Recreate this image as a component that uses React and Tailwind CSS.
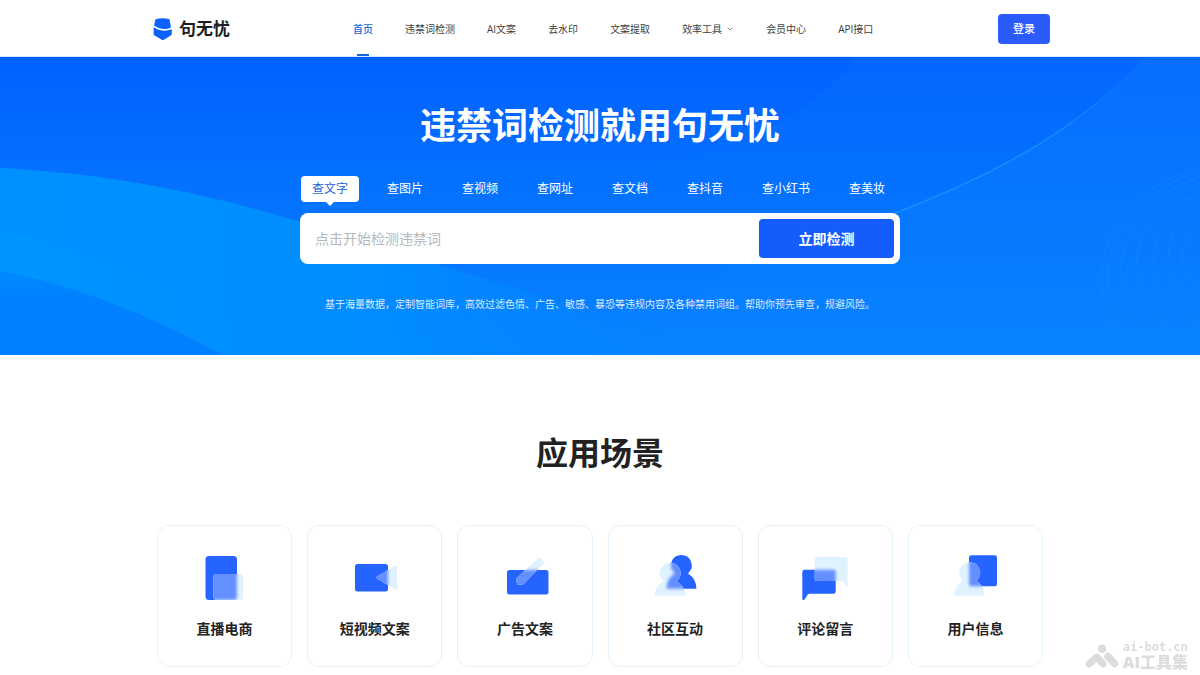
import React from 'react';
import { ChevronDown } from 'lucide-react';

const NAV = ['首页', '违禁词检测', 'AI文案', '去水印', '文案提取', '效率工具', '会员中心', 'API接口'];
const TABS = ['查文字', '查图片', '查视频', '查网址', '查文档', '查抖音', '查小红书', '查美妆'];

function GlassIcon({ id, solid, glass }) {
  return (
    <svg viewBox="0 0 60 60" className="h-[60px] w-[60px]" aria-hidden="true">
      <defs>
        <clipPath id={`${id}-clip`}>{glass}</clipPath>
        <filter id={`${id}-blur`} x="-30%" y="-30%" width="160%" height="160%" colorInterpolationFilters="sRGB">
          <feGaussianBlur stdDeviation="1.8" />
        </filter>
      </defs>
      <g fill="#2664ff">{solid}</g>
      <g fill="#e1f2ff">{glass}</g>
      <g clipPath={`url(#${id}-clip)`}>
        <g fill="#6490ff" filter={`url(#${id}-blur)`}>{solid}</g>
      </g>
    </svg>
  );
}

const SCENES = [
  {
    id: 'live',
    label: '直播电商',
    solid: <rect x="10.500" y="8" width="31.500" height="44" rx="3.500" />,
    glass: <rect x="18.500" y="26" width="29.500" height="26" rx="3" />,
  },
  {
    id: 'video',
    label: '短视频文案',
    solid: <rect x="10" y="16" width="33" height="27.500" rx="2.500" />,
    glass: <path d="M32 28.500 L50.500 17.800 Q52 17 52 18.500 V40.500 Q52 42 50.500 41.200 L32 30.800 Q30.500 29.700 32 28.500 Z" />,
  },
  {
    id: 'ad',
    label: '广告文案',
    solid: <rect x="12" y="22" width="41.500" height="24.500" rx="2.500" />,
    glass: <path d="M44.300 9.200 L49.600 14.600 L28.500 36.200 L23.300 37 Q22 37 22 35.800 L21 30.800 Z" />,
  },
  {
    id: 'social',
    label: '社区互动',
    solid: (
      <path d="M36.300 7 A10.400 10.400 0 0 1 43.600 24.800 Q42.800 25.600 43.800 26.300 C48.500 29 51.300 34.500 51.400 40.700 H21.600 C21.800 34.500 24 29 28.800 26.300 Q29.800 25.600 29 24.800 A10.400 10.400 0 0 1 36.300 7 Z" />
    ),
    glass: (
      <path d="M25.200 14.800 A10.400 10.400 0 0 1 32.500 32.600 Q31.700 33.300 32.700 34 C37.300 36.500 39.800 41.500 40.100 47.700 H9.800 C10 41.500 12.900 36.500 17.700 34 Q18.700 33.300 17.900 32.600 A10.400 10.400 0 0 1 25.200 14.800 Z" />
    ),
  },
  {
    id: 'comment',
    label: '评论留言',
    solid: (
      <path d="M9.500 21.700 H38.500 Q40.700 21.700 40.700 24 V43.500 Q40.700 45.700 38.500 45.700 H15 Q13.300 45.700 12.500 47 L9.500 51.500 Q7.300 53 7.300 50.500 V24 Q7.300 21.700 9.500 21.700 Z" />
    ),
    glass: (
      <path d="M21.900 9 H50.500 Q52.700 9 52.700 11.200 V38 Q52.500 40 51 38.500 L48.300 34.500 Q47.500 33 46 33 H21.900 Q19.700 33 19.700 30.800 V11.200 Q19.700 9 21.900 9 Z" />
    ),
  },
  {
    id: 'user',
    label: '用户信息',
    solid: <rect x="24" y="7.300" width="28" height="31" rx="2.500" />,
    glass: (
      <path d="M24.700 14.300 A10.400 10.400 0 0 1 32 32.100 Q31.200 32.900 32.200 33.600 C36.800 36.300 39.200 41.500 39.400 47.700 H9.200 C9.400 41.500 12.400 36.300 17.200 33.600 Q18.200 32.900 17.400 32.100 A10.400 10.400 0 0 1 24.700 14.300 Z" />
    ),
  },
];

function HeroBackdrop() {
  return (
    <svg
      viewBox="0 0 1200 298"
      preserveAspectRatio="none"
      className="absolute inset-0 h-full w-full"
      aria-hidden="true"
    >
      <defs>
        <linearGradient id="sky" x1="0" y1="0" x2="0" y2="1">
          <stop offset="0" stopColor="#0566ff" />
          <stop offset="0.5" stopColor="#0473ff" />
          <stop offset="1" stopColor="#0683ff" />
        </linearGradient>
        <linearGradient id="deep" x1="0" y1="0" x2="0" y2="1">
          <stop offset="0" stopColor="#0060ff" stopOpacity="0.8" />
          <stop offset="1" stopColor="#0068ff" stopOpacity="0.1" />
        </linearGradient>
        <linearGradient id="right" x1="0" y1="0" x2="0" y2="1">
          <stop offset="0" stopColor="#0b75ff" />
          <stop offset="1" stopColor="#0883ff" />
        </linearGradient>
        <linearGradient id="wave" x1="0" y1="0" x2="1" y2="0">
          <stop offset="0" stopColor="#0091ff" />
          <stop offset="0.45" stopColor="#008eff" />
          <stop offset="1" stopColor="#0682ff" stopOpacity="0" />
        </linearGradient>
        <linearGradient id="band" x1="0" y1="0" x2="1" y2="0">
          <stop offset="0" stopColor="#0098ff" />
          <stop offset="1" stopColor="#008eff" stopOpacity="0" />
        </linearGradient>
        <linearGradient id="low" x1="0" y1="0" x2="0" y2="1">
          <stop offset="0" stopColor="#0088ff" />
          <stop offset="0.4" stopColor="#0080ff" />
          <stop offset="1" stopColor="#0080ff" />
        </linearGradient>
        <linearGradient id="edge" x1="0" y1="1" x2="1" y2="0">
          <stop offset="0" stopColor="#1292ff" />
          <stop offset="0.6" stopColor="#108aff" />
          <stop offset="1" stopColor="#0b75ff" stopOpacity="0" />
        </linearGradient>
      </defs>
      <rect width="1200" height="298" fill="url(#sky)" />
      <path d="M0 0 H857 C800 72 710 112 560 112 C380 116 200 112 0 112 Z" fill="url(#deep)" />
      <path d="M1145 0 C1085 66 1010 112 895 156 C850 172 800 186 740 198 L640 298 H1200 V0 Z" fill="url(#right)" fillOpacity="0.5" />
      <path d="M1145 0 C1085 66 1010 112 895 156" fill="none" stroke="url(#edge)" strokeWidth="1.500" />
      <path d="M0 111 C160 119 270 155 383 190 C470 218 600 258 760 298 H0 Z" fill="url(#wave)" />
      <path d="M0 174 C90 190 190 235 280 298 H0 Z" fill="url(#band)" fillOpacity="0.7" />
      <path d="M0 214 C75 228 150 258 222 298 H0 Z" fill="url(#low)" />
      <g fill="none" stroke="#1a8cff" strokeOpacity="0.4">
        <path d="M1200 111 C1145 123 1108 165 1103 208 C1099 245 1110 272 1126 298" />
        <path d="M1200 114 C1152 128 1114 168 1109 208 C1105 245 1118 274 1136 298" />
        <path d="M1200 119 C1158 135 1125 165 1121 208 C1118 240 1138 276 1160 296" />
        <path d="M1200 126 C1165 140 1138 165 1136 208 C1136 236 1158 268 1184 286" />
        <path d="M1200 135 C1172 150 1153 170 1153 208 C1155 232 1174 256 1200 270" />
        <path d="M1200 147 C1182 158 1168 176 1168 206 C1170 226 1184 242 1200 250" />
        <path d="M1200 163 C1188 172 1182 186 1182 204 C1184 216 1192 226 1200 230" />
      </g>
    </svg>
  );
}

function Header() {
  return (
    <header className="border-b border-[#d5eaff] bg-white">
      <div className="mx-auto flex max-w-[900px] items-center pt-0.5 pl-[3px]">
        <a href="#home" className="flex items-center gap-1.5 text-[17px] leading-6 font-bold text-[#1d1f24]">
          <svg viewBox="0 0 20 24" className="h-6 w-5" aria-hidden="true">
            <path d="M2.500 2.300 Q9.500 0 16.500 2.300 L18 10.500 Q10 14.500 1 8.500 Z" fill="#0b62ff" />
            <path d="M0.600 10.300 Q9 16 18.800 12.300 V16.500 Q18.800 17.800 17.800 18.500 L10.800 22.800 Q9.800 23.400 8.800 22.800 L1.600 18.500 Q0.600 17.800 0.600 16.500 Z" fill="#0b62ff" />
          </svg>
          句无忧
        </a>
        <nav className="ml-[123px] flex h-[54px] gap-8 text-[10px] text-[#3c3f44]" aria-label="主导航">
          {NAV.map((item, i) => {
            if (item === '效率工具') {
              return (
                <button key={item} type="button" className="flex items-center gap-1 whitespace-nowrap">
                  {item}
                  <ChevronDown className="h-2 w-2 text-[#8a8d93]" strokeWidth={3} />
                </button>
              );
            }
            return i === 0 ? (
              <a key={item} href="#home" aria-current="page" className="relative flex items-center font-medium whitespace-nowrap text-[#1d63d8]">
                {item}
                <span className="absolute bottom-0 left-1/2 h-0.5 w-3 -translate-x-1/2 bg-[#1766dd]" />
              </a>
            ) : (
              <a key={item} href={`#nav-${i}`} className="flex items-center whitespace-nowrap">
                {item}
              </a>
            );
          })}
        </nav>
        <button type="button" className="ml-auto h-[30px] w-[52px] rounded bg-[#2b5bfa] text-[11px] font-medium text-white">
          登录
        </button>
      </div>
    </header>
  );
}

function Hero() {
  return (
    <section className="relative bg-[#0473ff]">
      <HeroBackdrop />
      <div className="relative mx-auto flex max-w-[600px] flex-col pt-11 pb-[43px] text-white">
        <h1 className="text-center text-4xl leading-[50px] font-bold whitespace-nowrap">违禁词检测就用句无忧</h1>
        <div role="tablist" className="mt-[25px] flex gap-[17px] px-px">
          {TABS.map((tab, i) => (
            <button
              key={tab}
              type="button"
              role="tab"
              aria-selected={i === 0}
              className={
                i === 0
                  ? 'relative h-[26px] rounded bg-white px-[11px] text-xs whitespace-nowrap text-[#1d63d8]'
                  : 'h-[26px] px-[11px] text-xs whitespace-nowrap'
              }
            >
              {tab}
              {i === 0 && (
                <span className="absolute top-full left-1/2 -translate-x-1/2 border-x-4 border-t-4 border-x-transparent border-t-white" />
              )}
            </button>
          ))}
        </div>
        <form className="mt-[11px] flex rounded-lg bg-white p-1.5" onSubmit={(e) => e.preventDefault()}>
          <input
            type="text"
            aria-label="检测内容"
            placeholder="点击开始检测违禁词"
            className="min-w-0 flex-1 px-[9px] text-sm text-[#333] outline-none placeholder:text-[#b4b7bb]"
          />
          <button type="submit" className="h-[39px] w-[135px] rounded bg-[#145cfc] text-sm font-bold">
            立即检测
          </button>
        </form>
        <p className="mt-8 text-center text-[10px] leading-4 whitespace-nowrap text-[#d9ecff]">
          基于海量数据，定制智能词库，高效过滤色情、广告、敏感、暴恐等违规内容及各种禁用词组。帮助你预先审查，规避风险。
        </p>
      </div>
    </section>
  );
}

function Scenes() {
  return (
    <section className="mx-auto max-w-[886px] pt-[74px] pb-2">
      <h2 className="text-center text-[32px] leading-12 font-bold text-[#222]">应用场景</h2>
      <ul className="mt-12 grid grid-cols-6 gap-[15px]">
        {SCENES.map((s) => (
          <li key={s.id} className="flex h-[142px] flex-col items-center rounded-xl border border-[#e4f3fb] pt-[22px]">
            <GlassIcon id={s.id} solid={s.solid} glass={s.glass} />
            <h3 className="mt-[11px] text-sm leading-5 font-bold text-[#222]">{s.label}</h3>
          </li>
        ))}
      </ul>
    </section>
  );
}

function Watermark() {
  return (
    <div className="fixed right-3 bottom-1 flex items-center gap-1 text-[#dcdcdc]">
      <svg viewBox="0 0 34 24" className="h-6 w-[34px]" aria-hidden="true">
        <circle cx="17" cy="4.800" r="4.300" fill="currentColor" />
        <path d="M4 20 L12 13 L18 20" fill="none" stroke="currentColor" strokeWidth="7" strokeLinecap="round" strokeLinejoin="round" />
        <path d="M23 12.500 L29.500 19.500" stroke="currentColor" strokeWidth="7.500" strokeLinecap="round" />
      </svg>
      <div className="flex flex-col">
        <span className="font-['DejaVu_Sans_Mono',monospace] text-xs leading-3 font-bold">ai-bot.cn</span>
        <span className="text-base leading-[18px] font-black">AI工具集</span>
      </div>
    </div>
  );
}

export default function App() {
  return (
    <div className="bg-white font-['Open_Sans','Noto_Sans_CJK_SC',sans-serif]">
      <Header />
      <main>
        <Hero />
        <Scenes />
      </main>
      <Watermark />
    </div>
  );
}
